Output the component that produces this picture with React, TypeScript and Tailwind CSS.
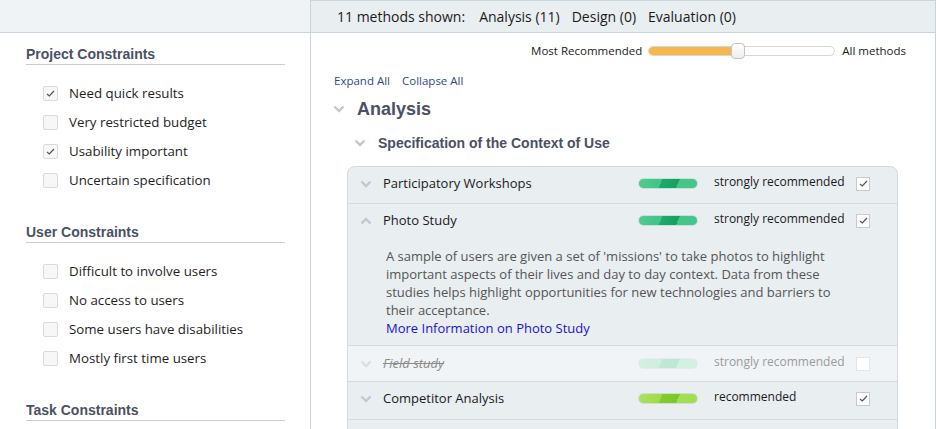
import React from "react";

type Level = "strong" | "rec";

const body = "font-['Open_Sans','Noto_Sans',sans-serif]";
const head = "font-['Liberation_Sans',Arial,sans-serif]";

function Chevron({ up = false, className = "" }: { up?: boolean; className?: string }) {
  return (
    <svg width="12" height="8" viewBox="0 0 12 8" className={className}>
      <path
        d={up ? "M1.5 6.5 L6 2 L10.5 6.5" : "M1.5 1.5 L6 6 L10.5 1.5"}
        fill="none"
        stroke="#c3c8cc"
        strokeWidth="2.4"
      />
    </svg>
  );
}

function Tick() {
  return (
    <svg width="9" height="7" viewBox="0 0 9 7">
      <path d="M1 4 L3.3 6 L8 1" fill="none" stroke="#555" strokeWidth="1.2" />
    </svg>
  );
}

function SideCheck({ label, checked = false }: { label: string; checked?: boolean }) {
  return (
    <div className="flex items-center h-[29px] pl-[17px]">
      <span className="w-[15px] h-[15px] rounded-[2px] border border-[#dadada] bg-[#f7f7f7] flex items-center justify-center">
        {checked && <Tick />}
      </span>
      <span className="ml-[11px] text-[13.3px] text-[#1e1e1e]">{label}</span>
    </div>
  );
}

function Section({ title, items }: { title: string; items: [string, boolean][] }) {
  return (
    <div className="mb-[27px]">
      <h3 className={`${head} font-bold text-[14px] leading-[20px] text-[#4a5163] border-b border-[#c9cdd1]`}>
        {title}
      </h3>
      <div className="mt-[14px]">
        {items.map(([l, c]) => (
          <SideCheck key={l} label={l} checked={c} />
        ))}
      </div>
    </div>
  );
}

function Bar({ level, faded = false }: { level: Level; faded?: boolean }) {
  const cls = faded
    ? "bg-[linear-gradient(115deg,#d3f0e3_0%,#cdeee0_38%,#bfe8d6_38%,#bde6d4_66%,#d3f0e3_66%)] border-[#e4ecec]"
    : level === "strong"
    ? "bg-[linear-gradient(115deg,#52cc91_0%,#40c487_38%,#1eaa6c_38%,#169f63_66%,#45c689_66%)] border-[#cfdcdc]"
    : "bg-[linear-gradient(115deg,#acE25e_0%,#9edc4c_38%,#82cd30_38%,#79c727_66%,#a2de52_66%)] border-[#d4dcd0]";
  return <span className={`block w-[60px] h-[11px] rounded-full border ${cls}`} />;
}

function RowCheck({ checked, faded = false }: { checked: boolean; faded?: boolean }) {
  return (
    <span
      className={`w-[14px] h-[14px] border flex items-center justify-center bg-white ${
        faded ? "border-[#e2e6e8]" : "border-[#c8cbcd]"
      }`}
    >
      {checked && <Tick />}
    </span>
  );
}

function MethodHeader({
  title,
  level,
  label,
  checked,
  up = false,
  faded = false,
}: {
  title: string;
  level: Level;
  label: string;
  checked: boolean;
  up?: boolean;
  faded?: boolean;
}) {
  return (
    <div className="flex items-center h-[33px] pl-[12px]">
      <Chevron up={up} className={faded ? "opacity-50" : ""} />
      <span
        className={`ml-[11px] w-[255px] text-[13px] ${
          faded ? "italic line-through text-[#8a8a8a]" : "text-[#1a1a1a]"
        }`}
      >
        {title}
      </span>
      <Bar level={level} faded={faded} />
      <span className={`ml-[16px] w-[142px] text-[12px] -mt-[3px] ${faded ? "text-[#9a9a9a]" : "text-[#1a1a1a]"}`}>
        {label}
      </span>
      <RowCheck checked={checked} faded={faded} />
    </div>
  );
}

export default function App() {
  return (
    <div className={`${body} flex w-[936px] h-[429px] overflow-hidden bg-white`}>
      <aside className="w-[311px] shrink-0 border-r border-[#c9d5dd]">
        <div className="h-[33px] bg-[#eff3f6] border-b border-[#c9d5dd]" />
        <div className="pl-[26px] pr-[25px] pt-[11px]">
          <Section
            title="Project Constraints"
            items={[
              ["Need quick results", true],
              ["Very restricted budget", false],
              ["Usability important", true],
              ["Uncertain specification", false],
            ]}
          />
          <Section
            title="User Constraints"
            items={[
              ["Difficult to involve users", false],
              ["No access to users", false],
              ["Some users have disabilities", false],
              ["Mostly first time users", false],
            ]}
          />
          <Section title="Task Constraints" items={[]} />
        </div>
      </aside>

      <main className="flex-1 border-r border-[#c9d5dd]">
        <div className="h-[33px] bg-[#e9eef1] border-b border-t border-[#c9d5dd] flex items-center pl-[26px] text-[14px] text-[#1a1a1a]">
          <span>11 methods shown:</span>
          <span className="ml-[14px]">Analysis (11)</span>
          <span className="ml-[12px]">Design (0)</span>
          <span className="ml-[12px]">Evaluation (0)</span>
        </div>

        <div className="flex items-center justify-end h-[35px] pr-[29px] text-[11.5px] text-[#1a1a1a]">
          <span>Most Recommended</span>
          <div className="relative ml-[6px] w-[187px] h-[10px] rounded-full border border-[#d6d6d6] bg-white">
            <div className="h-full w-[84px] rounded-l-full bg-[#f7b74c]" />
            <span className="absolute left-[82px] -top-[4px] w-[14px] h-[16px] rounded-[4px] border border-[#c4c4c4] bg-[linear-gradient(#ffffff,#eeeeee)]" />
          </div>
          <span className="ml-[7px]">All methods</span>
        </div>

        <div className="pl-[23px]">
          <div className="flex gap-[12px] text-[11.5px] text-[#2b4c7e] leading-[18px] mt-[4px]">
            <span>Expand All</span>
            <span>Collapse All</span>
          </div>

          <div className="flex items-center h-[22px] mt-[8px]">
            <Chevron className="-ml-[1px]" />
            <span className={`${head} ml-[12px] font-bold text-[18px] text-[#4a5163]`}>Analysis</span>
          </div>

          <div className="flex items-center h-[22px] mt-[12px] pl-[20px]">
            <Chevron />
            <span className={`${head} ml-[12px] font-bold text-[14px] text-[#4a5163]`}>
              Specification of the Context of Use
            </span>
          </div>

          <div className="ml-[13px] mt-[12px] w-[551px] rounded-t-[8px] border border-[#d4dbe0] bg-[#e9eef1]">
            <div className="h-[37px] border-b border-[#d4dbe0]">
              <MethodHeader title="Participatory Workshops" level="strong" label="strongly recommended" checked />
            </div>
            <div className="border-b border-[#d4dbe0] pb-[8px]">
              <MethodHeader title="Photo Study" level="strong" label="strongly recommended" checked up />
              <p className="mt-[10px] pl-[38px] text-[13px] leading-[18px] text-[#555]">
                A sample of users are given a set of 'missions' to take photos to highlight
                <br />
                important aspects of their lives and day to day context. Data from these
                <br />
                studies helps highlight opportunities for new technologies and barriers to
                <br />
                their acceptance.
                <br />
                <span className="text-[#1d10d0]">More Information on Photo Study</span>
              </p>
            </div>
            <div className="h-[36px] border-b border-[#d4dbe0] bg-[#f1f4f6] pt-[1px]">
              <MethodHeader title="Field study" level="strong" label="strongly recommended" checked={false} faded />
            </div>
            <div className="h-[38px] border-b border-[#d4dbe0]">
              <MethodHeader title="Competitor Analysis" level="rec" label="recommended" checked />
            </div>
            <div className="h-[30px]" />
          </div>
        </div>
      </main>
    </div>
  );
}
